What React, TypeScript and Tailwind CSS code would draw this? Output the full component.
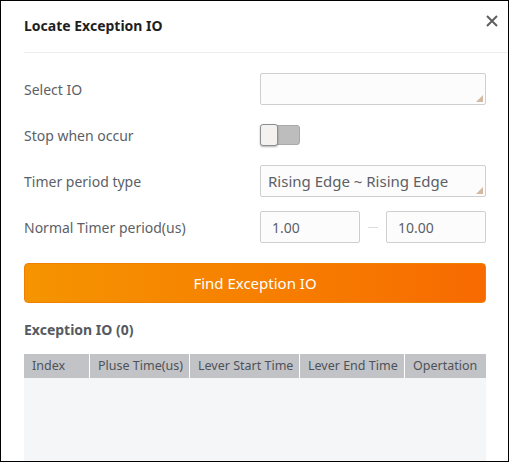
import React from 'react';

const Corner = () => (
  <svg className="absolute right-[2px] bottom-[2px]" width="7" height="7" viewBox="0 0 7 7">
    <polygon points="7,0 7,7 0,7" fill="#d4b8a0" />
  </svg>
);

const columns = [
  { label: 'Index', w: 'w-[65px]' },
  { label: 'Pluse Time(us)', w: 'w-[99px]' },
  { label: 'Lever Start Time', w: 'w-[109px]' },
  { label: 'Lever End Time', w: 'w-[104px]' },
  { label: 'Opertation', w: 'flex-1' },
];

export default function App() {
  return (
    <div
      className="w-[509px] h-[462px] border border-black bg-white overflow-hidden relative"
      style={{ fontFamily: '"Noto Sans", "Open Sans", sans-serif' }}
    >
      <button className="absolute right-[8px] top-[12px] w-[16px] h-[16px] flex items-center justify-center">
        <svg width="12" height="12" viewBox="0 0 12 12">
          <path d="M1 1 L11 11 M11 1 L1 11" stroke="#5f5f5f" strokeWidth="2" />
        </svg>
      </button>

      <div className="ml-[23px] h-[52px] border-b border-[#eceef1] flex items-center">
        <h1 className="text-[14px] font-bold text-[#1f1f1f] leading-none -mt-[1px]">Locate Exception IO</h1>
      </div>

      <div className="pl-[23px] pr-[22px] pt-[20px]">
        <div className="flex flex-col gap-[14px]">
          <div className="flex items-center h-[32px]">
            <span className="w-[236px] text-[14px] text-[#5c5f66]">Select IO</span>
            <div className="relative w-[226px] h-[32px] border border-[#cfcfcf] rounded-[2px] bg-[#fcfcfc]">
              <Corner />
            </div>
          </div>

          <div className="flex items-center h-[32px]">
            <span className="w-[236px] text-[14px] text-[#5c5f66]">Stop when occur</span>
            <div className="relative w-[40px] h-[22px]">
              <div className="absolute left-[4px] top-[1px] w-[36px] h-[20px] rounded-[3px] bg-[#bdbdbd] border border-[#a9a9a9]" />
              <div className="absolute left-0 top-0 w-[18px] h-[22px] rounded-[3px] bg-[#f4f2f0] border border-[#8e8e8e] shadow-[0_1px_2px_rgba(0,0,0,0.3)]" />
            </div>
          </div>

          <div className="flex items-center h-[32px]">
            <span className="w-[236px] text-[14px] text-[#5c5f66]">Timer period type</span>
            <div className="relative w-[226px] h-[32px] border border-[#cfcfcf] rounded-[2px] bg-[#fcfcfc] flex items-center pl-[7px]">
              <span className="text-[15px] text-[#5c5f66]">Rising Edge ~ Rising Edge</span>
              <Corner />
            </div>
          </div>

          <div className="flex items-center h-[32px]">
            <span className="w-[236px] text-[14px] text-[#5c5f66]">Normal Timer period(us)</span>
            <div className="w-[226px] flex items-center">
              <div className="w-[100px] h-[32px] border border-[#cfcfcf] rounded-[2px] bg-[#fcfcfc] flex items-center pl-[11px] text-[14px] text-[#5c5f66]">1.00</div>
              <div className="w-[26px] flex justify-center">
                <div className="w-[10px] h-px bg-[#dddddd]" />
              </div>
              <div className="flex-1 h-[32px] border border-[#cfcfcf] rounded-[2px] bg-[#fcfcfc] flex items-center pl-[11px] text-[14px] text-[#5c5f66]">10.00</div>
            </div>
          </div>
        </div>

        <button className="mt-[20px] w-full h-[40px] rounded-[4px] bg-gradient-to-r from-[#f59400] to-[#f76a00] border border-[#f08000] text-white text-[15px] flex items-center justify-center">
          Find Exception IO
        </button>

        <div className="mt-[16px] h-[20px] flex items-center text-[14px] font-bold text-[#555a60]">Exception IO (0)</div>

        <div className="mt-[15px]">
          <div className="flex h-[24px] bg-white gap-px">
            {columns.map((c) => (
              <div key={c.label} className={`${c.w} h-full bg-[#c2c3c7] flex items-center pl-[8px] text-[12.5px] text-[#4e5258] whitespace-nowrap overflow-hidden`}>
                {c.label}
              </div>
            ))}
          </div>
          <div className="h-[100px] bg-[#f5f6f8]" />
        </div>
      </div>
    </div>
  );
}
